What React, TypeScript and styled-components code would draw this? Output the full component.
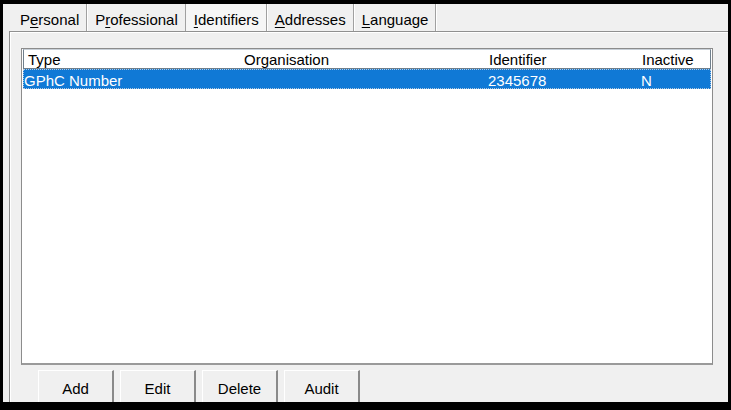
import React from 'react'
import styled, { createGlobalStyle } from 'styled-components'

const GlobalStyle = createGlobalStyle`
  html, body { margin: 0; padding: 0; background: #000; }
  body { font-family: 'Liberation Sans', Arial, sans-serif; }
`

const Frame = styled.div`
  width: 731px;
  height: 410px;
  box-sizing: border-box;
  background: #000;
  padding: 4px 3px 8px 3px;
`

const Window = styled.div`
  height: 100%;
  background: #f0f0f0;
  display: flex;
  flex-direction: column;
  overflow: hidden;
  font-size: 15px;
  color: #000;
`

const TabStrip = styled.div`
  display: flex;
  height: 29px;
  padding-left: 9px;
  align-items: flex-end;
`

const Tab = styled.div<{ $active?: boolean }>`
  height: 27px;
  box-sizing: border-box;
  padding: 7px 7px 0 8px;
  border-right: 1px solid #a0a0a0;
  box-shadow: 1px 0 0 #fff;
  background: ${(p) => (p.$active ? '#f6f6f6' : 'transparent')};
  white-space: nowrap;
  & u { text-decoration-thickness: 1px; text-underline-offset: 2px; }
`

const Panel = styled.div`
  flex: 1;
  margin-left: 6px;
  border-top: 1px solid #909090;
  border-left: 1px solid #909090;
  box-shadow: inset 1px 1px 0 #fff;
  display: flex;
  flex-direction: column;
  padding: 16px 0 0 11px;
`

const List = styled.div`
  width: 692px;
  height: 317px;
  box-sizing: border-box;
  background: #fff;
  border: 1px solid #8c8c8c;
  border-bottom: 2px solid #9a9a9a;
  padding: 0 1px;
`

const HeaderRow = styled.div`
  display: grid;
  grid-template-columns: 216px 245px 153px 1fr;
  height: 20px;
  box-sizing: border-box;
  border: 1px solid #6f7f8c;
  border-top-color: #c8d0d8;
  align-items: center;
  line-height: 18px;
  padding-top: 2px;
`

const Row = styled.div<{ $selected?: boolean }>`
  display: grid;
  grid-template-columns: 216px 245px 153px 1fr;
  height: 20px;
  box-sizing: border-box;
  align-items: center;
  line-height: 18px;
  padding-top: 3px;
  background: ${(p) => (p.$selected ? '#1079d6' : 'transparent')};
  color: ${(p) => (p.$selected ? '#fff' : '#000')};
  outline: ${(p) => (p.$selected ? '1px dotted #b0c8e0' : 'none')};
  outline-offset: -1px;
`

const Cell = styled.div<{ $pad?: number }>`
  padding-left: ${(p) => p.$pad ?? 4}px;
  white-space: nowrap;
  overflow: hidden;
`

const ButtonRow = styled.div`
  display: flex;
  gap: 6px;
  padding: 5px 0 0 17px;
`

const Button = styled.div`
  width: 76px;
  height: 34px;
  box-sizing: border-box;
  border-top: 1px solid #fff;
  border-left: 1px solid #fff;
  border-right: 2px solid #8a8a8a;
  border-bottom: 2px solid #8a8a8a;
  display: flex;
  align-items: center;
  justify-content: center;
  padding-top: 3px;
`

const tabs: [string, string, string][] = [
  ['P', 'e', 'rsonal'],
  ['P', 'r', 'ofessional'],
  ['', 'I', 'dentifiers'],
  ['', 'A', 'ddresses'],
  ['', 'L', 'anguage'],
]

const App = () => {
  return (
    <Frame>
      <GlobalStyle />
      <Window>
        <TabStrip>
          {tabs.map(([a, u, b], i) => (
            <Tab key={i} $active={i === 2}>
              {a}
              <u>{u}</u>
              {b}
            </Tab>
          ))}
        </TabStrip>
        <Panel>
          <List>
            <HeaderRow>
              <Cell>Type</Cell>
              <Cell>Organisation</Cell>
              <Cell>Identifier</Cell>
              <Cell>Inactive</Cell>
            </HeaderRow>
            <Row $selected>
              <Cell $pad={1}>GPhC Number</Cell>
              <Cell />
              <Cell>2345678</Cell>
              <Cell>N</Cell>
            </Row>
          </List>
          <ButtonRow>
            <Button>Add</Button>
            <Button>Edit</Button>
            <Button>Delete</Button>
            <Button>Audit</Button>
          </ButtonRow>
        </Panel>
      </Window>
    </Frame>
  )
}

export default App
